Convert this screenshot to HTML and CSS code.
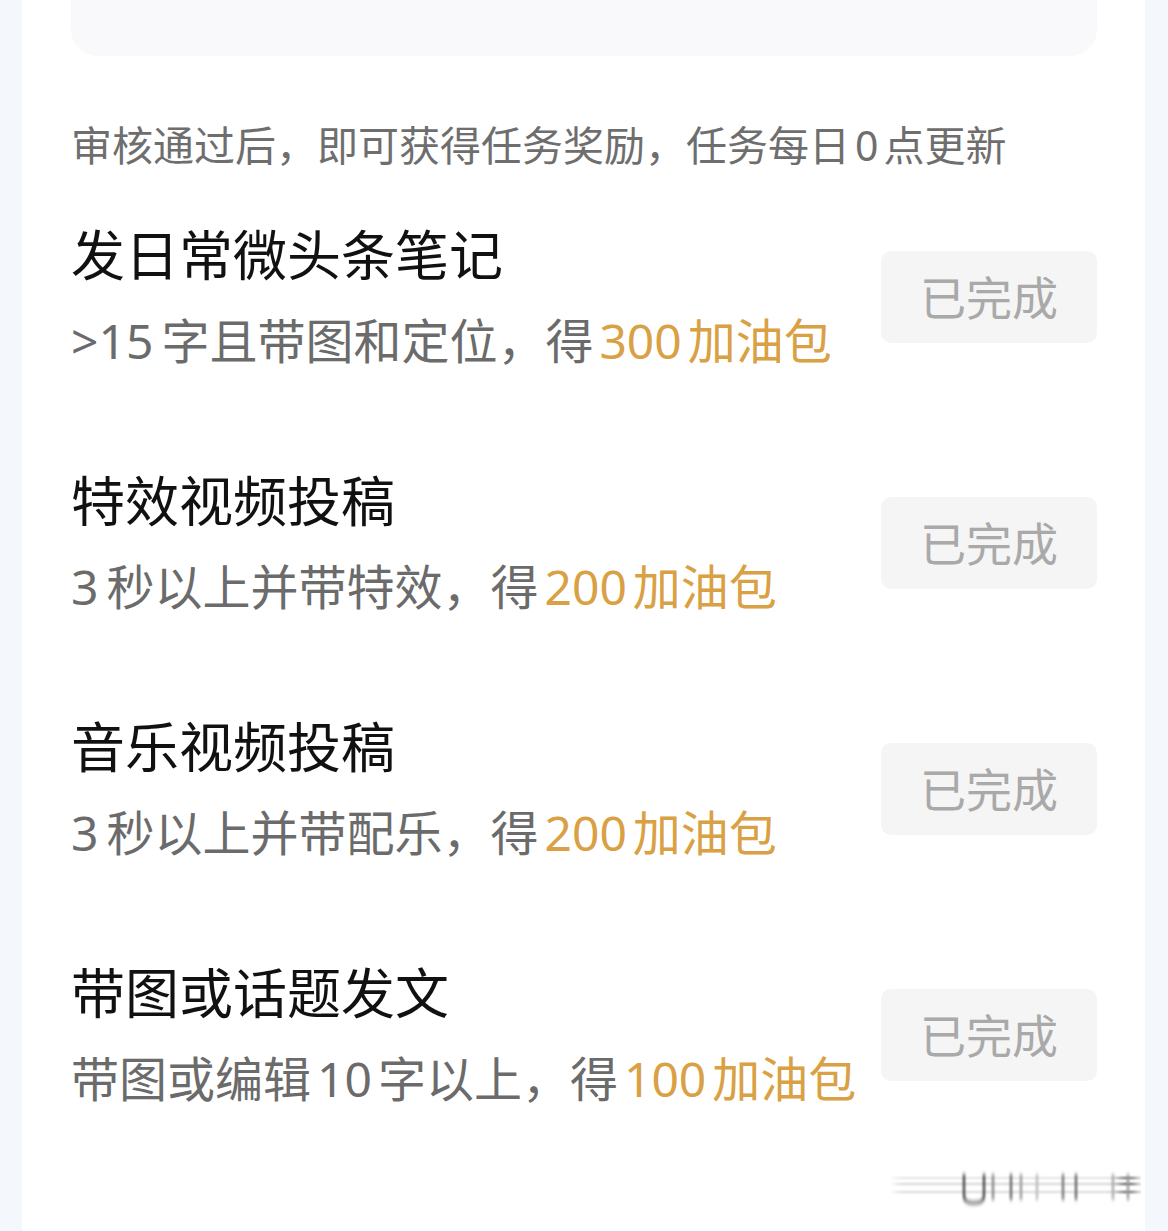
FILE: index.html
```html
<!DOCTYPE html>
<html lang="zh-CN">
<head>
    <meta charset="UTF-8">
    <meta name="viewport" content="width=device-width, initial-scale=1.0">
    <title>任务中心</title>
    <link rel="stylesheet" href="styles.css">
</head>
<body>
    <div class="panel">
        <div class="summary-card"></div>

        <p class="hint">审核通过后，即可获得任务奖励，任务每日<span class="num">0</span>点更新</p>

        <div class="task-list">
            <div class="task">
                <div class="task-info">
                    <div class="task-title">发日常微头条笔记</div>
                    <div class="task-desc">&gt;<span class="num lead">15</span>字且带图和定位，得<span class="reward"><span class="num">300</span>加油包</span></div>
                </div>
                <button class="task-btn" disabled>已完成</button>
            </div>

            <div class="task">
                <div class="task-info">
                    <div class="task-title">特效视频投稿</div>
                    <div class="task-desc"><span class="num lead">3</span>秒以上并带特效，得<span class="reward"><span class="num">200</span>加油包</span></div>
                </div>
                <button class="task-btn" disabled>已完成</button>
            </div>

            <div class="task">
                <div class="task-info">
                    <div class="task-title">音乐视频投稿</div>
                    <div class="task-desc"><span class="num lead">3</span>秒以上并带配乐，得<span class="reward"><span class="num">200</span>加油包</span></div>
                </div>
                <button class="task-btn" disabled>已完成</button>
            </div>

            <div class="task">
                <div class="task-info">
                    <div class="task-title">带图或话题发文</div>
                    <div class="task-desc">带图或编辑<span class="num">10</span>字以上，得<span class="reward"><span class="num">100</span>加油包</span></div>
                </div>
                <button class="task-btn" disabled>已完成</button>
            </div>
        </div>

        <svg class="watermark" width="250" height="44" viewBox="0 0 250 44">
            <defs>
                <filter id="smear" x="-20%" y="-50%" width="140%" height="200%">
                    <feGaussianBlur stdDeviation="5 1"/>
                </filter>
                <filter id="soft" x="-20%" y="-20%" width="140%" height="140%">
                    <feGaussianBlur stdDeviation="1.2 2"/>
                </filter>
            </defs>
            <g filter="url(#smear)" fill="none">
                <line x1="4" y1="12" x2="244" y2="12" stroke="#e2e2e2" stroke-width="2"/>
                <line x1="4" y1="18" x2="244" y2="18" stroke="#d4d4d4" stroke-width="2"/>
                <line x1="4" y1="26" x2="244" y2="26" stroke="#dadada" stroke-width="2"/>
                <line x1="226" y1="12" x2="246" y2="12" stroke="#555" stroke-width="2"/>
                <line x1="226" y1="18" x2="246" y2="18" stroke="#444" stroke-width="2"/>
                <line x1="226" y1="26" x2="246" y2="26" stroke="#555" stroke-width="2"/>
            </g>
            <g fill="none" stroke-width="2.4" filter="url(#soft)">
                <path d="M73 8 V30 Q73 37 83 37 Q93 37 93 30 V8" stroke="#444"/>
                <line x1="102" y1="8" x2="102" y2="34" stroke="#888"/>
                <line x1="120" y1="8" x2="120" y2="34" stroke="#666"/>
                <line x1="130" y1="8" x2="130" y2="34" stroke="#999"/>
                <line x1="146" y1="8" x2="146" y2="34" stroke="#bbb"/>
                <line x1="172" y1="8" x2="172" y2="34" stroke="#777"/>
                <line x1="185" y1="8" x2="185" y2="34" stroke="#666"/>
                <line x1="222" y1="8" x2="222" y2="34" stroke="#aaa"/>
                <line x1="237" y1="8" x2="237" y2="34" stroke="#999"/>
            </g>
        </svg>
    </div>
</body>
</html>
```

FILE: styles.css
```css
body, html {
    margin: 0;
    padding: 0;
    background-color: #f4f8fd;
    font-family: "Noto Sans", "Noto Sans CJK SC", sans-serif;
}

.panel {
    position: relative;
    margin: 0 23px 0 22px;
    padding: 0 48px 0 49px;
    min-height: 1231px;
    box-sizing: border-box;
    background-color: #ffffff;
}

.summary-card {
    height: 56px;
    background-color: #f9f9fb;
    border-radius: 0 0 26px 26px;
}

.hint {
    margin: 64px 0 0 0;
    font-size: 41px;
    line-height: 50px;
    color: #6e6e6e;
}

.hint .num {
    margin: 0 5px;
}

.task-list {
    display: flex;
    flex-direction: column;
    gap: 102px;
    margin-top: 55px;
}

.task {
    display: flex;
    align-items: center;
    justify-content: space-between;
}

.task-info {
    display: flex;
    flex-direction: column;
    gap: 28px;
}

.task-title {
    font-size: 54px;
    line-height: 60px;
    color: #111111;
}

.task-desc {
    font-size: 48px;
    line-height: 56px;
    color: #6b6b6b;
}

.task-desc .num {
    margin: 0 6px;
}

.task-desc .num.lead {
    margin-left: 0;
    margin-right: 8px;
}

.reward {
    color: #d9a044;
}

.task-btn {
    width: 216px;
    height: 92px;
    padding: 0 0 4px 0;
    border: none;
    border-radius: 10px;
    background-color: #f5f5f5;
    color: #a9a9a9;
    font-family: "Noto Sans CJK SC", sans-serif;
    font-size: 46px;
}

.watermark {
    position: absolute;
    right: 4px;
    top: 1166px;
}
```
